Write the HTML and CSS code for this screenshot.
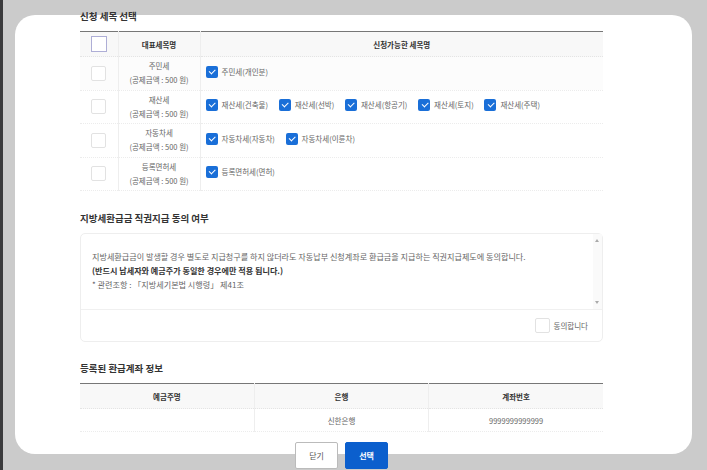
FILE: index.html
```html
<!DOCTYPE html>
<html>
<head>
	<title>자동납부 신청</title>
	<link rel="stylesheet" href="styles.css">
</head>
<body>
	<div class="sheet">
		<div class="content">
			<h2 class="sec-title">신청 세목 선택</h2>
			<table class="grid tax">
				<colgroup>
					<col class="c-chk">
					<col class="c-name">
					<col>
				</colgroup>
				<thead>
					<tr>
						<th><span class="box head"></span></th>
						<th>대표세목명</th>
						<th>신청가능한 세목명</th>
					</tr>
				</thead>
				<tbody>
					<tr class="odd">
						<td><span class="box"></span></td>
						<td class="name">주민세<br>(공제금액 : 500 원)</td>
						<td class="items">
							<label class="item"><span class="tick"></span>주민세(개인분)</label>
						</td>
					</tr>
					<tr>
						<td><span class="box"></span></td>
						<td class="name">재산세<br>(공제금액 : 500 원)</td>
						<td class="items">
							<label class="item"><span class="tick"></span>재산세(건축물)</label>
							<label class="item"><span class="tick"></span>재산세(선박)</label>
							<label class="item"><span class="tick"></span>재산세(항공기)</label>
							<label class="item"><span class="tick"></span>재산세(토지)</label>
							<label class="item"><span class="tick"></span>재산세(주택)</label>
						</td>
					</tr>
					<tr>
						<td><span class="box"></span></td>
						<td class="name">자동차세<br>(공제금액 : 500 원)</td>
						<td class="items">
							<label class="item"><span class="tick"></span>자동차세(자동차)</label>
							<label class="item"><span class="tick"></span>자동차세(이륜차)</label>
						</td>
					</tr>
					<tr>
						<td><span class="box"></span></td>
						<td class="name">등록면허세<br>(공제금액 : 500 원)</td>
						<td class="items">
							<label class="item"><span class="tick"></span>등록면허세(면허)</label>
						</td>
					</tr>
				</tbody>
			</table>

			<h2 class="sec-title gap">지방세환급금 직권지급 동의 여부</h2>
			<div class="agree">
				<div class="agree-text">
					<p>지방세환급금이 발생할 경우 별도로 지급청구를 하지 않더라도 자동납부 신청계좌로 환급금을 지급하는 직권지급제도에 동의합니다.</p>
					<p class="strong">(반드시 납세자와 예금주가 동일한 경우에만 적용 됩니다.)</p>
					<p>* 관련조항 : 「지방세기본법 시행령」 제41조</p>
					<div class="scroll"><span class="up"></span><span class="down"></span></div>
				</div>
				<div class="agree-foot">
					<label class="agree-chk"><span class="box"></span>동의합니다</label>
				</div>
			</div>

			<h2 class="sec-title gap2">등록된 환급계좌 정보</h2>
			<table class="grid acct">
				<thead>
					<tr>
						<th>예금주명</th>
						<th>은행</th>
						<th>계좌번호</th>
					</tr>
				</thead>
				<tbody>
					<tr>
						<td></td>
						<td>신한은행</td>
						<td>9999999999999</td>
					</tr>
				</tbody>
			</table>

			<div class="btns">
				<button class="btn">닫기</button>
				<button class="btn primary">선택</button>
			</div>
		</div>
	</div>
</body>
</html>
```

FILE: styles.css
```css
html, body {
	margin: 0;
	height: 100%;
}
body {
	background: #cbcbcb;
	border-left: 3px solid #3a3a3c;
	font-family: "Noto Sans CJK KR", "Noto Sans", sans-serif;
	color: #555;
	overflow: hidden;
}
.sheet {
	display: flow-root;
	background: #fff;
	border-radius: 20px;
	margin: 15px 15px 0 12px;
	height: 439px;
}
.content {
	width: 523px;
	margin: -7px 0 0 65px;
}
.sec-title {
	margin: 0 0 7px;
	font-size: 9.5px;
	line-height: 16px;
	font-weight: bold;
	color: #333;
}
.sec-title.gap { margin-top: 19px; }
.sec-title.gap2 { margin-top: 18px; }

table.grid {
	width: 100%;
	border-collapse: collapse;
	border-top: 1px solid #777;
	font-size: 7.5px;
	color: #666;
	table-layout: fixed;
}
table.grid th {
	background: #f8f8f8;
	font-weight: bold;
	color: #333;
	height: 24px;
	padding: 0;
	border-bottom: 1px dotted #e4e4e4;
}
table.grid td {
	padding: 0;
	text-align: center;
	border-bottom: 1px dotted #ececec;
}
.tax col.c-chk { width: 38px; }
.tax col.c-name { width: 82px; }
.tax th + th, .tax td + td { border-left: 1px solid #eee; }
.tax tbody td { height: 32.5px; line-height: 14px; }
.tax tr.odd td { background: #fcfcfc; }
.tax td.items {
	text-align: left;
	padding-left: 5px;
}

.box {
	display: inline-block;
	width: 13px;
	height: 13px;
	border: 1px solid #e2e2e2;
	border-radius: 2px;
	background: #fff;
	vertical-align: middle;
}
.box.head {
	width: 14px;
	height: 14px;
	border-color: #aeaed6;
	border-radius: 0;
}

.item {
	display: inline-flex;
	align-items: center;
	margin-right: 9px;
	color: #666;
}
.tick {
	position: relative;
	width: 12px;
	height: 12px;
	border-radius: 2px;
	background: #1a6fd8;
	margin-right: 4px;
}
.tick::after {
	content: "";
	position: absolute;
	left: 3.5px;
	top: 3px;
	width: 5px;
	height: 2.5px;
	border-left: 1.5px solid #fff;
	border-bottom: 1.5px solid #fff;
	transform: rotate(-45deg);
}

.agree {
	border: 1px solid #eee;
	border-radius: 5px;
	font-size: 8.1px;
	color: #666;
}
.agree-text {
	position: relative;
	height: 76px;
	box-sizing: border-box;
	padding: 16px 20px 0 11px;
	border-bottom: 1px solid #f0f0f0;
}
.agree-text p {
	margin: 0;
	line-height: 14px;
}
.agree-text p.strong {
	font-weight: bold;
	color: #333;
}
.scroll {
	position: absolute;
	right: 0;
	top: 0;
	bottom: 0;
	width: 9px;
	background: #fafafa;
}
.scroll span {
	position: absolute;
	left: 2px;
	width: 0;
	height: 0;
	border-left: 2px solid transparent;
	border-right: 2px solid transparent;
}
.scroll .up { top: 5px; border-bottom: 3px solid #aaa; }
.scroll .down { bottom: 5px; border-top: 3px solid #aaa; }
.agree-foot {
	height: 31px;
	display: flex;
	align-items: center;
	justify-content: flex-end;
	padding-right: 14px;
	font-size: 7.5px;
}
.agree-chk {
	display: flex;
	align-items: center;
	gap: 4px;
	color: #666;
}

.acct { font-size: 8px; }
.acct th + th, .acct td + td { border-left: 1px solid #eee; }
.acct tbody td { height: 22px; }

.btns {
	display: flex;
	justify-content: center;
	gap: 7px;
	margin-top: 10px;
}
.btn {
	width: 43px;
	height: 27px;
	border: 1px solid #bbb;
	border-radius: 2px;
	background: #fff;
	font-family: inherit;
	font-size: 8px;
	color: #555;
	padding: 0;
}
.btn.primary {
	background: #0b5fcd;
	border-color: #0b5fcd;
	color: #fff;
	font-weight: bold;
}
```
